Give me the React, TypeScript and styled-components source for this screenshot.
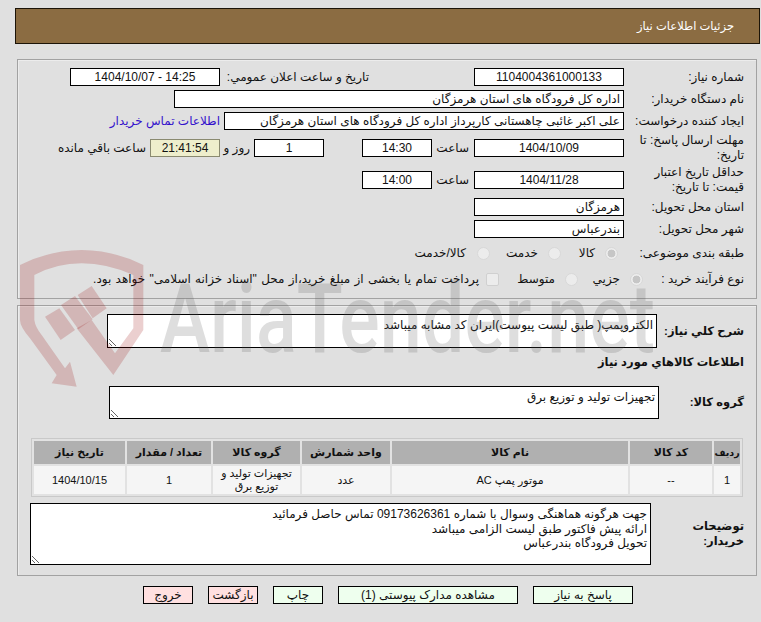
import React from "react";
import styled, { createGlobalStyle } from "styled-components";

const FONT = `"Liberation Sans", "DejaVu Sans", sans-serif`;

const Global = createGlobalStyle`
  html, body { margin: 0; padding: 0; background: #e0e0e0; }
  body { font-family: ${FONT}; font-size: 12px; color: #111; }
  * { box-sizing: border-box; }
`;

const Page = styled.div`
  position: relative;
  width: 761px;
  height: 622px;
  padding-top: 8px;
  direction: rtl;
  overflow: hidden;
`;

const Header = styled.div`
  height: 36px;
  margin: 0 1px 0 15px;
  padding-right: 25px;
  display: flex;
  align-items: center;
  background: #8b6c42;
  border: 1px solid #1c1408;
  color: #fff;
  font-size: 11.5px;
`;

const Panel = styled.section<{ $top: number; $pt: number; $pb: number }>`
  margin: ${(p) => p.$top}px 4px 0 17px;
  padding: ${(p) => p.$pt}px 12px ${(p) => p.$pb}px 0;
  border: 1px solid #a2a2a2;
  box-shadow: inset 1px 1px 0 #ececec;
`;

const Rows = styled.div`
  display: flex;
  flex-direction: column;
  gap: 4px;
`;

const Row = styled.div<{ $h?: number }>`
  display: flex;
  align-items: center;
  height: ${(p) => p.$h ?? 18}px;
`;

const Label = styled.label<{ $w?: number; $bold?: boolean }>`
  flex: none;
  width: ${(p) => p.$w ?? 120}px;
  padding-left: ${(p) => (p.$bold ? 0 : 8)}px;
  padding-right: ${(p) => (p.$bold ? 0 : 0)}px;
  line-height: 15px;
  font-size: ${(p) => (p.$bold ? 11.5 : 12)}px;
  font-weight: ${(p) => (p.$bold ? 700 : 400)};
`;

const Note = styled.span<{ $w?: number; $gap?: number }>`
  flex: none;
  width: ${(p) => (p.$w ? `${p.$w}px` : "auto")};
  margin-right: ${(p) => p.$gap ?? 0}px;
  white-space: nowrap;
`;

const Field = styled.input<{ $w: number; $gap?: number; $center?: boolean; $timer?: boolean }>`
  flex: none;
  width: ${(p) => p.$w}px;
  height: 18px;
  margin: 0 ${(p) => p.$gap ?? 0}px 0 0;
  padding: 0 3px;
  border: 1px solid ${(p) => (p.$timer ? "#8a8a70" : "#000")};
  border-radius: 0;
  background: ${(p) => (p.$timer ? "#eeeecc" : "#fff")};
  color: #111;
  font-family: ${FONT};
  font-size: 12px;
  text-align: ${(p) => (p.$center ? "center" : "right")};
  outline: none;
`;

const ContactLink = styled.a`
  margin-right: 4px;
  color: #3311cc;
  white-space: nowrap;
  text-decoration: none;
`;

const Option = styled.div<{ $w: number; $ml?: number; $spread?: boolean }>`
  flex: none;
  display: flex;
  align-items: center;
  width: ${(p) => p.$w}px;
  gap: ${(p) => p.$ml ?? 10}px;
  white-space: nowrap;
  word-spacing: ${(p) => (p.$spread ? 1 : 0)}px;
`;

const Radio = styled.input.attrs({ type: "radio", disabled: true })`
  appearance: none;
  flex: none;
  position: relative;
  width: 13px;
  height: 13px;
  margin: 0;
  border: 1px solid #d8d8d8;
  border-radius: 50%;
  background: #ececec;
  &:checked {
    background: radial-gradient(circle, #c6c6c6 0 3.6px, #ececec 4.2px);
  }
`;

const Check = styled.input.attrs({ type: "checkbox", disabled: true })`
  appearance: none;
  flex: none;
  width: 13px;
  height: 13px;
  margin: 0;
  border: 1px solid #d0d0d0;
  border-radius: 2px;
  background: #ececec;
`;

const Area = styled.textarea<{ $w: number; $h: number }>`
  flex: none;
  display: block;
  width: ${(p) => p.$w}px;
  height: ${(p) => p.$h}px;
  margin: 0;
  padding: 3px 3px;
  border: 1px solid #000;
  border-radius: 0;
  background: #fff;
  color: #111;
  font-family: ${FONT};
  font-size: 12px;
  line-height: 14.5px;
  outline: none;
  overflow: hidden;
`;

const Title = styled.h3`
  height: 28px;
  margin: 0 0 10px;
  display: flex;
  align-items: center;
  font-size: 11.5px;
  font-weight: 700;
`;

const Items = styled.table`
  width: 712px;
  margin: 19px 1px 6px 0;
  table-layout: fixed;
  border: 1px solid #c9c9c9;
  border-spacing: 2px;
  background: #e2e2e2;
  font-size: 11px;
  text-align: center;
`;

const Th = styled.th<{ $w: number; $tight?: boolean }>`
  width: ${(p) => p.$w}px;
  height: 23px;
  padding: 0;
  background: #b0b0b0;
  font-size: ${(p) => (p.$tight ? 9.5 : 11)}px;
  font-weight: 700;
  white-space: nowrap;
`;

const Td = styled.td`
  height: 28px;
  padding: 0 6px;
  background: #f5f5f5;
  line-height: 13px;
`;

const Actions = styled.div`
  display: flex;
  gap: 15px;
  margin: 10px 128px 0 0;
`;

const Action = styled.button<{ $w: number; $danger?: boolean }>`
  flex: none;
  width: ${(p) => p.$w}px;
  height: 18px;
  padding: 0;
  border: 1px solid #000;
  border-radius: 0;
  background: ${(p) => (p.$danger ? "#ffe0e0" : "#eeffee")};
  color: #111;
  font-family: ${FONT};
  font-size: 12px;
`;

const Watermark = styled.svg`
  position: absolute;
  left: 0;
  top: 0;
  pointer-events: none;
`;

const columns = [
  ["ردیف", 26],
  ["کد کالا", 82],
  ["نام کالا", 236],
  ["واحد شمارش", 88],
  ["گروه کالا", 87],
  ["تعداد / مقدار", 84],
  ["تاریخ نیاز", 91],
] as const;

export default function App() {
  return (
    <Page>
      <Global />
      <Header>جزئیات اطلاعات نیاز</Header>

      <Panel $top={15} $pt={8} $pb={8}>
        <Rows>
          <Row>
            <Label>شماره نیاز:</Label>
            <Field $w={150} $center readOnly value="1104004361000133" />
            <Note $w={149} $gap={105}>تاریخ و ساعت اعلان عمومي:</Note>
            <Field $w={150} $center readOnly dir="ltr" value="1404/10/07 - 14:25" />
          </Row>
          <Row>
            <Label>نام دستگاه خریدار:</Label>
            <Field $w={450} readOnly value="اداره کل فرودگاه های استان هرمزگان" />
          </Row>
          <Row>
            <Label>ایجاد کننده درخواست:</Label>
            <Field $w={400} readOnly value="علی اکبر غائبی چاهستانی کارپرداز اداره کل فرودگاه های استان هرمزگان" />
            <ContactLink href="#">اطلاعات تماس خریدار</ContactLink>
          </Row>
          <Row $h={28}>
            <Label>مهلت ارسال پاسخ: تا تاریخ:</Label>
            <Field $w={150} $center readOnly value="1404/10/09" />
            <Note $w={37} $gap={5}>ساعت</Note>
            <Field $w={70} $center readOnly value="14:30" />
            <Field $w={70} $gap={38} $center readOnly value="1" />
            <Note $w={30} $gap={4}>روز و</Note>
            <Field $w={70} $center $timer readOnly value="21:41:54" />
            <Note $gap={4}>ساعت باقي مانده</Note>
          </Row>
          <Row $h={28}>
            <Label>حداقل تاریخ اعتبار قیمت: تا تاریخ:</Label>
            <Field $w={150} $center readOnly value="1404/11/28" />
            <Note $w={37} $gap={5}>ساعت</Note>
            <Field $w={70} $center readOnly value="14:00" />
          </Row>
          <Row>
            <Label>استان محل تحویل:</Label>
            <Field $w={150} readOnly value="هرمزگان" />
          </Row>
          <Row>
            <Label>شهر محل تحویل:</Label>
            <Field $w={150} readOnly value="بندرعباس" />
          </Row>
          <Row $h={22}>
            <Label $w={126}>طبقه بندی موضوعی:</Label>
            <Option $w={57}><Radio name="kind" defaultChecked />کالا</Option>
            <Option $w={71}><Radio name="kind" />خدمت</Option>
            <Option $w={90} $ml={11}><Radio name="kind" />کالا/خدمت</Option>
          </Row>
          <Row $h={22}>
            <Label $w={101}>نوع فرآیند خرید :</Label>
            <Option $w={65}><Radio name="proc" defaultChecked />جزیي</Option>
            <Option $w={79}><Radio name="proc" />متوسط</Option>
            <Option $w={400} $ml={7} $spread><Check />پرداخت تمام یا بخشی از مبلغ خرید،از محل "اسناد خزانه اسلامی" خواهد بود.</Option>
          </Row>
        </Rows>
      </Panel>

      <Panel $top={6} $pt={8} $pb={10}>
        <Row $h={34}>
          <Label $w={87} $bold>شرح کلي نیاز:</Label>
          <Area $w={550} $h={34} readOnly value="الکتروپمپ( طبق لیست پیوست)ایران کد مشابه میباشد" />
        </Row>
        <Title>اطلاعات کالاهاي مورد نیاز</Title>
        <Row $h={33}>
          <Label $w={85} $bold>گروه کالا:</Label>
          <Area $w={550} $h={33} readOnly value="تجهیزات تولید و توزیع برق" />
        </Row>
        <Items>
          <thead>
            <tr>{columns.map(([name, w]) => <Th key={name} $w={w} $tight={w < 30}>{name}</Th>)}</tr>
          </thead>
          <tbody>
            <tr>
              <Td>1</Td>
              <Td>--</Td>
              <Td>موتور پمپ AC</Td>
              <Td>عدد</Td>
              <Td>تجهیزات تولید و توزیع برق</Td>
              <Td>1</Td>
              <Td>1404/10/15</Td>
            </tr>
          </tbody>
        </Items>
        <Row $h={62}>
          <Label $w={93} $bold>توضیحات خریدار:</Label>
          <Area
            $w={621}
            $h={62}
            readOnly
            value={"جهت هرگونه هماهنگی وسوال با شماره 09173626361 تماس حاصل فرمائید\nارائه پیش فاکتور طبق لیست الزامی میباشد\nتحویل فرودگاه بندرعباس"}
          />
        </Row>
      </Panel>

      <Actions>
        <Action $w={100}>پاسخ به نیاز</Action>
        <Action $w={180}>مشاهده مدارک پیوستی (1)</Action>
        <Action $w={50}>چاپ</Action>
        <Action $w={50} $danger>بازگشت</Action>
        <Action $w={50} $danger>خروج</Action>
      </Actions>

      <Watermark width="761" height="622" viewBox="0 0 761 622">
        <g transform="translate(10 240) scale(0.3333)" fill="rgb(150,0,0)" fillOpacity="0.19">
          <path d="M30 75 Q120 30 215 30 Q310 30 400 75 L400 270 L310 405 L200 265 L245 240 L315 340 L370 265 L370 105 Q290 70 215 70 Q140 70 73 105 L73 240 Q76 262 95 285 L165 385 L180 365 L200 440 L125 430 L140 405 L60 295 Q30 260 30 240 Z" />
          <path d="M105 230 L148 205 L195 270 L152 300 Z" />
          <path d="M153 195 L195 168 L248 238 L205 268 Z" />
          <path d="M203 165 L245 138 L290 205 L248 235 Z" />
        </g>
        <text
          x="160"
          y="352"
          textLength="495"
          lengthAdjust="spacingAndGlyphs"
          fontFamily="Roboto, sans-serif"
          fontWeight="500"
          fontSize="96"
          direction="ltr"
          fill="rgb(90,90,90)"
          fillOpacity="0.2"
        >
          AriaTender.net
        </text>
      </Watermark>
    </Page>
  );
}
